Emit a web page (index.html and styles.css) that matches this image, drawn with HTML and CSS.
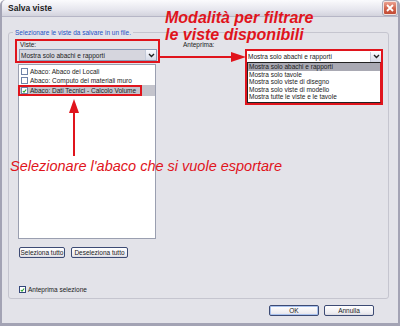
FILE: index.html
```html
<!DOCTYPE html>
<html lang="it">
<head>
  <meta charset="UTF-8"/>
  <title>Salva viste</title>
  <link rel="stylesheet" href="styles.css">
</head>
<body>
  <div class="window">
    <div class="titlebar">
      <span class="title">Salva viste</span>
      <span class="close">
        <svg width="12" height="12" viewBox="0 0 12 12"><path d="M3 3 L9 9 M9 3 L3 9" stroke="#fff" stroke-width="1.8"/></svg>
      </span>
    </div>

    <div class="content">
      <div class="group">
        <span class="group-title">Selezionare le viste da salvare in un file.</span>
        <div class="cols">
          <div class="col-left">
            <div class="viste-box">
              <div class="lbl">Viste:</div>
              <div class="combo">
                <span class="combo-text">Mostra solo abachi e rapporti</span>
                <span class="combo-btn"><svg width="7" height="5" viewBox="0 0 7 5"><path d="M1 1 L3.5 3.5 L6 1" fill="none" stroke="#222" stroke-width="1.4"/></svg></span>
              </div>
            </div>
            <div class="listbox">
              <div class="item"><span class="chk"></span>Abaco: Abaco dei Locali</div>
              <div class="item"><span class="chk"></span>Abaco: Computo dei materiali muro</div>
              <div class="item sel"><span class="sel-mark"><span class="chk on">
                <svg width="6" height="6" viewBox="0 0 6 6"><path d="M1 3 L2.4 4.5 L5 1.2" fill="none" stroke="#21a121" stroke-width="1.3"/></svg>
              </span>Abaco: Dati Tecnici - Calcolo Volume</span></div>
            </div>
            <div class="btn-row">
              <button class="btn w46">Seleziona tutto</button>
              <button class="btn w57">Deseleziona tutto</button>
            </div>
            <div class="check-row">
              <span class="chk on">
                <svg width="6" height="6" viewBox="0 0 6 6"><path d="M1 3 L2.4 4.5 L5 1.2" fill="none" stroke="#21a121" stroke-width="1.3"/></svg>
              </span>Anteprima selezione
            </div>
          </div>

          <div class="col-right">
            <div class="lbl">Anteprima:</div>
            <div class="preview-combo">
              <div class="combo plain">
                <span class="combo-text">Mostra solo abachi e rapporti</span>
                <span class="combo-btn"><svg width="7" height="5" viewBox="0 0 7 5"><path d="M1 1 L3.5 3.5 L6 1" fill="none" stroke="#222" stroke-width="1.4"/></svg></span>
              </div>
              <div class="drop-list">
                <div class="opt hi">Mostra solo abachi e rapporti</div>
                <div class="opt">Mostra solo tavole</div>
                <div class="opt">Mostra solo viste di disegno</div>
                <div class="opt">Mostra solo viste di modello</div>
                <div class="opt">Mostra tutte le viste e le tavole</div>
              </div>
            </div>
          </div>
        </div>
      </div>

      <div class="footer">
        <button class="btn big default">OK</button>
        <button class="btn big">Annulla</button>
      </div>
    </div>

    <div class="note note-top">Modalità per filtrare<br>le viste disponibili</div>
    <div class="note note-bottom">Selezionare l'abaco che si vuole esportare</div>
    <svg class="arrows" width="400" height="326" viewBox="0 0 400 326">
      <path d="M160 57 H233" stroke="#e0141c" stroke-width="2"/>
      <path d="M231 52 L246 57 L231 62 Z" fill="#e0141c"/>
      <path d="M74 156 V110" stroke="#e0141c" stroke-width="2"/>
      <path d="M69 113 L74 99 L79 113 Z" fill="#e0141c"/>
    </svg>
  </div>
</body>
</html>
```

FILE: styles.css
```css
html, body { margin:0; padding:0; width:400px; height:326px; overflow:hidden; }
body { font-family:"Liberation Sans", Arial, sans-serif; font-size:6.5px; color:#1a1a1a; }

.window {
  position:relative; width:400px; height:326px; box-sizing:border-box;
  background:#e3e3e9;
  border:2px solid #a3a3b4; border-top:none; border-bottom-width:3px;
  border-radius:5px 5px 0 0;
}

/* title bar */
.titlebar {
  height:17px; box-sizing:border-box;
  display:flex; align-items:center; justify-content:space-between;
  padding:0 1px 0 6px;
  background:linear-gradient(#fbfbfd, #e6e6ee 60%, #d3d3dd);
  border-bottom:1px solid #b6b6c6;
  border-radius:5px 5px 0 0;
}
.title { font-weight:bold; font-size:8.5px; color:#1b1b22; }
.close {
  width:14px; height:14px; box-sizing:border-box;
  display:flex; align-items:center; justify-content:center;
  background:linear-gradient(#eba08f, #d0634c 55%, #c24a34);
  border:1px solid #f4e4e0; outline:1px solid #a7a7b6; border-radius:2px;
}

.content { padding:15px 0 0 6px; }

/* group box */
.group {
  width:381px; height:267px; box-sizing:border-box;
  border:1px solid #c5c5cf; border-radius:3px;
  padding:0 0 0 6px;
}
.group-title {
  display:block; width:max-content;
  margin:-5px 0 0 -2px; padding:0 2px;
  line-height:9px; background:#e3e3e9; color:#2352c4;
}
.cols { display:flex; margin-top:2px; }
.col-left { width:145px; }
.col-right { margin-left:23px; }
.col-right .lbl { margin-top:2px; }

.lbl { line-height:8px; }

.viste-box {
  height:24px; box-sizing:border-box;
  border:2px solid #e0141c; padding:0 0 0 2px;
}
.viste-box .lbl { padding-left:1px; margin-top:-1px; line-height:9px; }

.combo {
  width:138px; height:12px; box-sizing:border-box;
  display:flex; align-items:center; justify-content:space-between;
  background:#fff; border:1px solid #8c9cb8;
  padding-left:1px;
}
.viste-box .combo { background:#d6d6de; }
.combo-btn {
  width:10px; height:10px; display:flex; align-items:center; justify-content:center;
  background:linear-gradient(#fbfbff, #d7dbe8); border-left:1px solid #c5cbd9;
}

.listbox {
  width:138px; height:175px; box-sizing:border-box;
  margin:1px 0 0 3px;
  background:#fff; border:1px solid #9a9fb0;
  padding-top:2px;
}
.item { height:9px; display:flex; align-items:center; padding-left:2px; }
.item.sel { background:#c4c4cc; height:11px; }
.sel-mark {
  display:flex; align-items:center; height:11px; box-sizing:border-box;
  border:2px solid #e0141c; margin-left:-3px; padding:0 4px 0 1px;
}
.chk {
  width:7px; height:7px; box-sizing:border-box; margin-right:2px;
  background:#fff; border:1px solid #33467a;
  display:inline-flex; align-items:center; justify-content:center;
}
.item .chk { border-color:#7083a8; }

.btn-row { display:flex; gap:6px; margin:8px 0 0 4px; }
.btn {
  height:11px; padding:0; box-sizing:border-box;
  font:6.5px "Liberation Sans", Arial, sans-serif; color:#1a1a1a;
  background:linear-gradient(#ffffff, #ecebf0 80%, #d8d8e0);
  border:1px solid #3d4b74; border-radius:2px;
}
.w46 { width:46px; }
.w57 { width:57px; }

.check-row { display:flex; align-items:center; margin:28px 0 0 4px; }

/* preview dropdown */
.preview-combo {
  width:138px; margin:0 0 0 62px;
  border:2px solid #e0141c; box-sizing:border-box;
}
.preview-combo .combo { width:100%; border:none; height:11px; }
.drop-list { border:1px solid #222; border-right-color:#e0141c; background:#fff; padding-bottom:1px; }
.opt { height:7.5px; line-height:7.5px; padding-left:1px; }
.opt.hi { background:#a9a9b3; }

/* footer */
.footer { display:flex; justify-content:flex-end; gap:5px; margin:6px 24px 0 0; }
.btn.big { width:50px; }
.btn.default { box-shadow:inset 0 0 0 1px #a9c2ee; }

/* annotations on top of the dialog */
.note {
  position:absolute; color:#e0141c; font-family:"Liberation Sans", Arial, sans-serif;
  font-style:italic; white-space:nowrap;
}
.note-top { left:163px; top:9px; font-size:16px; font-weight:bold; line-height:17px; }
.note-bottom { left:8px; top:158px; font-size:14.5px; }
.arrows { position:absolute; left:-2px; top:0; pointer-events:none; }
```
